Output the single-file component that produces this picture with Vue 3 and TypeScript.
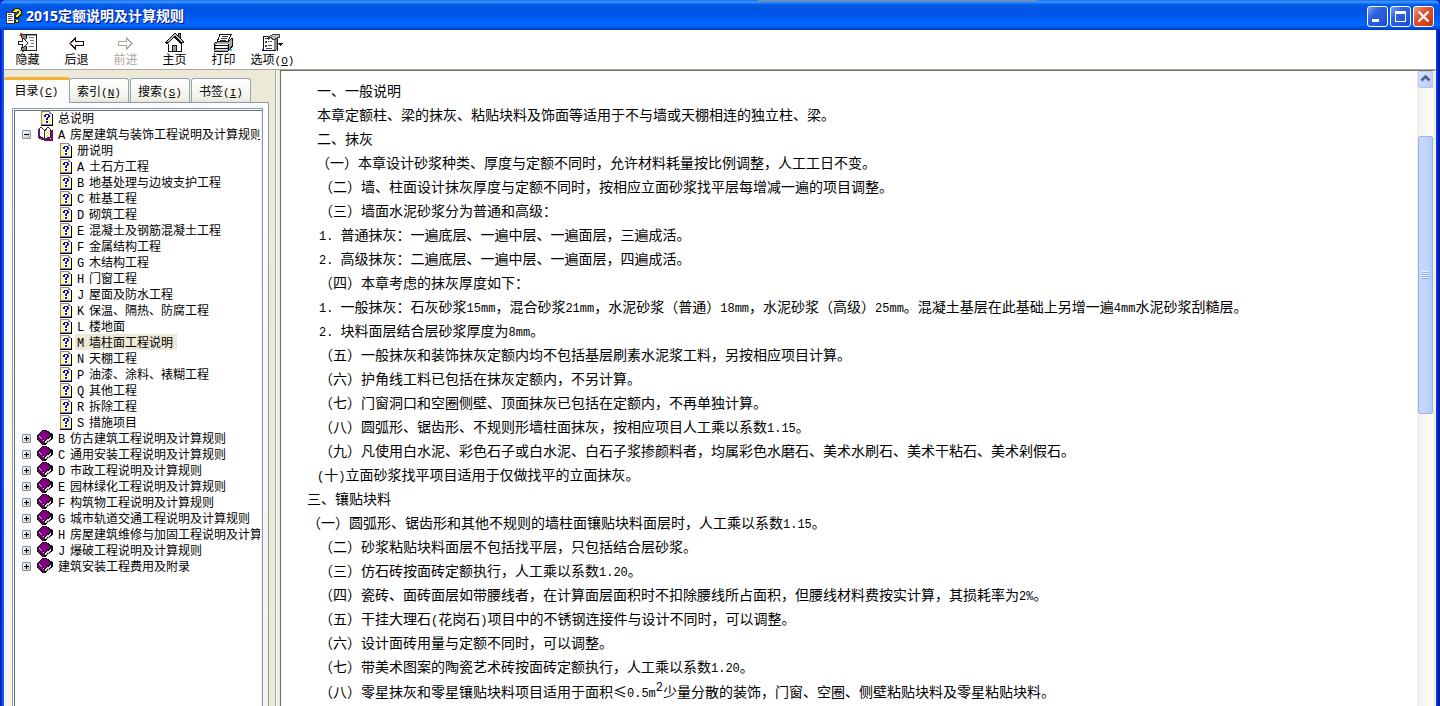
<script setup lang="ts">
import { ref } from 'vue'

interface Segment { text: string; latin: boolean }
interface Line { text: string; kind: 'flush' | 'lead' | 'item' | 'outer' | 'deep'; sup?: string; tail?: string }
interface Node { label: string; icon: 'page' | 'open' | 'book'; level: number; toggle?: '+' | '-' }

const split = (text: string): Segment[] =>
  text
    .split(/([\x20-\x7e]+)/)
    .filter(Boolean)
    .map((part) => ({ text: part, latin: /^[\x20-\x7e]/.test(part) }))

const title = '2015定额说明及计算规则'
const selected = ref('M 墙柱面工程说明')
const activeTab = ref('目录')

const tools = [
  { id: 'hide', label: '隐藏' },
  { id: 'back', label: '后退' },
  { id: 'forward', label: '前进' },
  { id: 'home', label: '主页' },
  { id: 'print', label: '打印' },
  { id: 'options', label: '选项', key: 'O' },
]

const tabs = [
  { label: '目录', key: 'C' },
  { label: '索引', key: 'N' },
  { label: '搜索', key: 'S' },
  { label: '书签', key: 'I' },
]

const chapters = [
  '册说明', 'A 土石方工程', 'B 地基处理与边坡支护工程', 'C 桩基工程', 'D 砌筑工程',
  'E 混凝土及钢筋混凝土工程', 'F 金属结构工程', 'G 木结构工程', 'H 门窗工程',
  'J 屋面及防水工程', 'K 保温、隔热、防腐工程', 'L 楼地面', 'M 墙柱面工程说明',
  'N 天棚工程', 'P 油漆、涂料、裱糊工程', 'Q 其他工程', 'R 拆除工程', 'S 措施项目',
]
const volumes = [
  'B 仿古建筑工程说明及计算规则', 'C 通用安装工程说明及计算规则', 'D 市政工程说明及计算规则',
  'E 园林绿化工程说明及计算规则', 'F 构筑物工程说明及计算规则', 'G 城市轨道交通工程说明及计算规则',
  'H 房屋建筑维修与加固工程说明及计算规则', 'J 爆破工程说明及计算规则', '建筑安装工程费用及附录',
]
const nodes: Node[] = [
  { label: '总说明', icon: 'page', level: 0 },
  { label: 'A 房屋建筑与装饰工程说明及计算规则', icon: 'open', level: 0, toggle: '-' },
  ...chapters.map((label): Node => ({ label, icon: 'page', level: 1 })),
  ...volumes.map((label): Node => ({ label, icon: 'book', level: 0, toggle: '+' })),
]

const lines: Line[] = [
  { kind: 'flush', text: '一、一般说明' },
  { kind: 'flush', text: '本章定额柱、梁的抹灰、粘贴块料及饰面等适用于不与墙或天棚相连的独立柱、梁。' },
  { kind: 'flush', text: '二、抹灰' },
  { kind: 'lead', text: '（一）本章设计砂浆种类、厚度与定额不同时，允许材料耗量按比例调整，人工工日不变。' },
  { kind: 'item', text: '（二）墙、柱面设计抹灰厚度与定额不同时，按相应立面砂浆找平层每增减一遍的项目调整。' },
  { kind: 'item', text: '（三）墙面水泥砂浆分为普通和高级：' },
  { kind: 'item', text: '1. 普通抹灰：一遍底层、一遍中层、一遍面层，三遍成活。' },
  { kind: 'item', text: '2. 高级抹灰：二遍底层、一遍中层、一遍面层，四遍成活。' },
  { kind: 'item', text: '（四）本章考虑的抹灰厚度如下：' },
  { kind: 'item', text: '1. 一般抹灰：石灰砂浆15mm，混合砂浆21mm，水泥砂浆（普通）18mm，水泥砂浆（高级）25mm。混凝土基层在此基础上另增一遍4mm水泥砂浆刮糙层。' },
  { kind: 'item', text: '2. 块料面层结合层砂浆厚度为8mm。' },
  { kind: 'item', text: '（五）一般抹灰和装饰抹灰定额内均不包括基层刷素水泥浆工料，另按相应项目计算。' },
  { kind: 'item', text: '（六）护角线工料已包括在抹灰定额内，不另计算。' },
  { kind: 'item', text: '（七）门窗洞口和空圈侧壁、顶面抹灰已包括在定额内，不再单独计算。' },
  { kind: 'item', text: '（八）圆弧形、锯齿形、不规则形墙柱面抹灰，按相应项目人工乘以系数1.15。' },
  { kind: 'item', text: '（九）凡使用白水泥、彩色石子或白水泥、白石子浆掺颜料者，均属彩色水磨石、美术水刷石、美术干粘石、美术剁假石。' },
  { kind: 'flush', text: '(十)立面砂浆找平项目适用于仅做找平的立面抹灰。' },
  { kind: 'outer', text: '三、镶贴块料' },
  { kind: 'outer', text: '（一）圆弧形、锯齿形和其他不规则的墙柱面镶贴块料面层时，人工乘以系数1.15。' },
  { kind: 'item', text: '（二）砂浆粘贴块料面层不包括找平层，只包括结合层砂浆。' },
  { kind: 'item', text: '（三）仿石砖按面砖定额执行，人工乘以系数1.20。' },
  { kind: 'item', text: '（四）瓷砖、面砖面层如带腰线者，在计算面层面积时不扣除腰线所占面积，但腰线材料费按实计算，其损耗率为2%。' },
  { kind: 'item', text: '（五）干挂大理石(花岗石)项目中的不锈钢连接件与设计不同时，可以调整。' },
  { kind: 'item', text: '（六）设计面砖用量与定额不同时，可以调整。' },
  { kind: 'item', text: '（七）带美术图案的陶瓷艺术砖按面砖定额执行，人工乘以系数1.20。' },
  { kind: 'item', text: '（八）零星抹灰和零星镶贴块料项目适用于面积≤0.5m', sup: '2', tail: '少量分散的装饰，门窗、空圈、侧壁粘贴块料及零星粘贴块料。' },
]
</script>

<template>
  <div class="window">
    <header class="titlebar">
      <span class="notch"></span>
      <svg class="app-icon" width="16" height="16" viewBox="0 0 16 16" shape-rendering="crispEdges">
        <path d="M0 4h8v11H0z" fill="#fff" stroke="#333" />
        <path d="M2 6h4v1H2zM2 8h5v1H2zM2 10h4v1H2zM2 12h5v1H2z" fill="#555" />
        <path d="M6 3V2h1V1h2V0h4v1h2v1h1v5h-1v1h-1v1h-1v2H9V7h1V6h1V5h1V3h-2v2H6zM9 12h4v3H9z" fill="#222" />
        <path d="M7 3h1V2h1V1h4v1h1v1h1v3h-1v1h-1v1h-1v1h-2V7h1V6h1V5h1V3h-2v1H7zM10 12h2v2h-2z" fill="#ffe818" />
      </svg>
      <h1>{{ title }}</h1>
      <button class="cap" aria-label="最小化">
        <svg width="21" height="21" viewBox="0 0 21 21"><path d="M5 13h7v3H5z" fill="#fff" /></svg>
      </button>
      <button class="cap" aria-label="最大化">
        <svg width="21" height="21" viewBox="0 0 21 21"><path d="M5 5h11v11H5zM6 8v7h9V8z" fill="#fff" fill-rule="evenodd" /></svg>
      </button>
      <button class="cap close" aria-label="关闭">
        <svg width="21" height="21" viewBox="0 0 21 21"><path d="M5.500 5.500l10 10M15.500 5.500l-10 10" stroke="#fff" stroke-width="2.200" /></svg>
      </button>
    </header>

    <div class="frame">
      <nav class="toolbar">
        <button v-for="tool in tools" :key="tool.id" class="tool" :disabled="tool.id === 'forward'">
          <svg v-if="tool.id === 'hide'" width="20" height="20" viewBox="0 0 20 20" shape-rendering="crispEdges">
            <path d="M2 1h17v1H2zM18 1h1v17h-1zM3 17h16v1H3zM3 2h1v3H3zM3 14h1v4H3zM8 2h1v4H8zM8 13h1v5H8z" fill="#222" />
            <path d="M4 2h4v15H4z" fill="#888" />
            <path d="M9 2h9v15H9z" fill="#fff" /><path d="M9 2h9v1H9z" fill="#999" />
            <path d="M11 4h5v1h-5zM12 7h4v1h-4zM13 10h3v1h-3zM11 13h5v1h-5z" fill="#777" />
            <path d="M0 8h4V5h2v1h1v1h1v1h1v1h1v2H9v1H8v1H7v1H6v1H4v-3H0z" fill="#222" />
            <path d="M1 9h4V6h1v1h1v1h1v1h1v2H8v1H7v1H6v1H5v-3H1z" fill="#fff" />
            <path d="M2 0h2v2H2zM4 18h2v1H4z" fill="#e02020" /><path d="M1 2h2v1H1zM2 17h2v1H2z" fill="#18b030" />
          </svg>
          <svg v-else-if="tool.id === 'back'" width="16" height="20" viewBox="0 0 16 20" shape-rendering="crispEdges">
            <path d="M0 10h1V9h1V8h1V7h1V6h1V5h1V4h1v4h8v5H7v4H6v-1H5v-1H4v-1H3v-1H2v-1H1v-1H0z" fill="#111" />
            <path d="M2 10h1V9h1V8h1V7h1v2h8v3H6v2H5v-1H4v-1H3v-1H2z" fill="#fff" />
            <path d="M0 10h2v1H0zM1 9h1v1H1z" fill="#d02020" /><path d="M1 11h1v1H1z" fill="#208030" />
          </svg>
          <svg v-else-if="tool.id === 'forward'" width="16" height="20" viewBox="0 0 16 20" shape-rendering="crispEdges">
            <path d="M15 10h-1V9h-1V8h-1V7h-1V6h-1V5H9V4H8v4H0v5h8v4h1v-1h1v-1h1v-1h1v-1h1v-1h1v-1h1z" fill="#aca899" />
            <path d="M13 10h-1V9h-1V8h-1V7H9v2H1v3h8v2h1v-1h1v-1h1v-1h1z" fill="#fff" />
          </svg>
          <svg v-else-if="tool.id === 'home'" width="20" height="20" viewBox="0 0 20 20" shape-rendering="crispEdges">
            <path d="M13 0h3v7h-3z" fill="#888" /><path d="M13 0h3v1h-3zM13 1h1v3h-1zM15 1h1v6h-1z" fill="#111" />
            <path d="M10 2l7 8v8H3v-8z" fill="#fff" />
            <path d="M3 11h1v8H3zM16 11h1v8h-1zM3 18h14v1H3z" fill="#111" />
            <path d="M9 0h2v1h1v1h1v1h1v1h1v1h1v1h1v1h1v1h1v2h-2v1h-2v-1h-1V9h-1V8h-1V7h-1V6h-1V5h-1V4H9v1H8v1H7v1H6v1H5v1H4v1H3v1H1v-1H0V9h1V8h1V7h1V6h1V5h1V4h1V3h1V2h1V1h1z" fill="#111" />
            <path d="M9 1h2v1h1v1h1v1h1v1h1v1h1v1h1v1h1v1h-2V8h-1V7h-1V6h-1V5h-1V4h-1V3H9v1H8v1H7v1H6v1H5v1H4v1H2V8h1V7h1V6h1V5h1V4h1V3h1V2h1z" fill="#bbb" />
            <path d="M7 12h5v6H7z" fill="#111" /><path d="M8 13h3v5H8z" fill="#999" />
          </svg>
          <svg v-else-if="tool.id === 'print'" width="22" height="20" viewBox="0 0 22 20" shape-rendering="crispEdges">
            <path d="M7 1.500h11L14.500 9H4z" fill="#fff" stroke="#111" />
            <path d="M9 3.500h6M8 5.500h6M7 7.500h6" stroke="#333" />
            <path d="M1.500 10.500L5 8.500h10l4-3v8l-4 4.500H1.500z" fill="#aaa" stroke="#111" />
            <path d="M3 11h12v1H3z" fill="#fff" /><path d="M2 12h13v1H2zM2 15h13v1H2z" fill="#111" />
            <path d="M3 13h11v2H3z" fill="#fff" /><path d="M3 16h11v1H3z" fill="#ddd" />
            <path d="M15 11h1v7h-1z" fill="#111" />
            <path d="M17 16h2v2h-2zM1 17h1v1H1z" fill="#18d8e8" />
          </svg>
          <svg v-else width="22" height="20" viewBox="0 0 22 20" shape-rendering="crispEdges">
            <path d="M1 3h13v15H1z" fill="#111" /><path d="M2 4h11v13H2z" fill="#fff" /><path d="M12 6h3v11h-3z" fill="#888" />
            <path d="M15 6h1v12h-1zM3 5h5v1H3z" fill="#222" />
            <path d="M3 8h2v2H3zM3 12h2v2H3zM6 8h1v1H6zM8 8h2v1H8zM6 12h4v1H6zM4 15h6v1H4z" fill="#444" />
            <path d="M6 3h2V2h2V1h8v4h-2v1h-2v1h-4V6H9V5H7v2H6z" fill="#444" />
            <path d="M8 3h2V2h7v2h-2v1h-2v1h-2V5h-1V4H8z" fill="#bbb" />
            <path d="M0 16h2v2H0z" fill="#1818d0" /><path d="M16 10h5v1h-5zM17 11h3v1h-3zM18 12h1v1h-1z" fill="#111" />
          </svg>
          <span>{{ tool.label }}<span v-if="tool.key" class="latin">(<u>{{ tool.key }}</u>)</span></span>
        </button>
      </nav>

      <div class="body">
        <aside class="side">
          <div class="tabs" role="tablist">
            <button
              v-for="tab in tabs" :key="tab.key" class="tab" role="tab"
              :class="{ active: tab.label === activeTab }" :aria-selected="tab.label === activeTab"
              @click="activeTab = tab.label"
            >{{ tab.label }}<span class="latin">(<u>{{ tab.key }}</u>)</span></button>
          </div>
          <div class="panel">
            <ul class="tree">
              <li v-for="node in nodes" :key="node.label" class="node" :class="{ child: node.level === 1 }">
                <button v-if="node.toggle" class="toggle" :aria-label="node.toggle === '+' ? '展开' : '折叠'">
                  <svg width="9" height="9" viewBox="0 0 9 9" shape-rendering="crispEdges">
                    <path d="M2 4h5v1H2z" fill="#000" /><path v-if="node.toggle === '+'" d="M4 2h1v5H4z" fill="#000" />
                  </svg>
                </button>
                <span v-else class="toggle-gap"></span>
                <svg class="glyph" width="16" height="16" viewBox="0 0 16 16" shape-rendering="crispEdges">
                  <g v-if="node.icon === 'page'">
                    <path d="M4 1h9v1h1v1h1v1h1v12H4z" fill="#000" />
                    <path d="M4 1h9v1h1v1h1v1h-3V2H5v12H4z" fill="#8a8a8a" />
                    <path d="M5 2h7v2h3v11H5z" fill="#fff" /><path d="M4 1h1v14H4zM5 14h10v1H5z" fill="#8a8a8a" />
                    <path d="M5 2h1v1H5zM7 2h1v1H7zM9 2h1v1H9zM6 3h1v1H6zM5 4h1v1H5zM13 4h1v1h-1zM6 5h1v1H6zM13 6h1v1h-1zM5 6h1v1H5zM6 7h1v1H6zM12 7h1v1h-1zM5 8h1v1H5zM7 8h1v1H7zM13 8h1v1h-1zM6 9h1v1H6zM12 9h1v1h-1zM5 10h1v1H5zM7 10h1v1H7zM11 10h1v1h-1zM13 10h1v1h-1zM6 11h1v1H6zM12 11h1v1h-1zM5 12h1v1H5zM7 12h1v1H7zM13 12h1v1h-1zM6 13h1v1H6zM12 13h1v1h-1z" fill="#ffee20" />
                    <path d="M8 4h4v1h1v2h-1v1h-1v2H9V8h1V7h1V5H9v2H7V5h1zM9 11h2v2H9z" fill="#0808e0" />
                  </g>
                  <g v-else-if="node.icon === 'open'">
                    <path d="M1 3h2v9h2v1h2v1h1v-1h6V4h2v11H7v-1H4v-1H2v-1H1z" fill="#800080" />
                    <path d="M2 2h1V1h2v1h1v1h1v1h1V3h1V2h1V1h2v1h1v1h1v9h-1v1H9v1H7v-1H5v-1H3v-1H2z" fill="#333" />
                    <path d="M3 2h2v1h1v1h1v8H6v-1H4v-1H3z" fill="#fff" />
                    <path d="M8 5h1V4h1V2h2v1h1v8h-3v1H8z" fill="#fff" />
                    <path d="M9 5h1v1H9zM11 4h1v1h-1zM10 6h1v1h-1zM12 5h1v1h-1zM9 7h1v1H9zM11 7h1v1h-1zM12 8h1v1h-1zM10 9h1v1h-1zM9 10h1v1H9zM11 10h1v1h-1z" fill="#f0d820" />
                  </g>
                  <g v-else>
                    <path d="M6 0h3l7 4v5l-8 6H6L0 10V5z" fill="#111" />
                    <path d="M6 1h3l5 4-6 5h-1L1 5z" fill="#800080" />
                    <path d="M1 6l6 5v3L1 9z" fill="#800080" />
                    <path d="M2 6h1v1H2zM3 7h1v1H3zM4 8h1v1H4zM6 10h1v1H6z" fill="#e8b0e8" />
                    <path d="M8 11l6-4v2l-6 4z" fill="#e8e8e8" /><path d="M9 12h2v-1h2v-1h1v1h-1v1h-2v1H9z" fill="#777" />
                  </g>
                </svg>
                <a href="#" class="label" :class="{ selected: node.label === selected }" @click.prevent="selected = node.label"><span
                  v-for="(seg, i) in split(node.label)" :key="i" :class="{ latin: seg.latin }"
                >{{ seg.text }}</span></a>
              </li>
            </ul>
          </div>
        </aside>
        <div class="splitter"></div>
        <main class="content">
          <article class="doc">
            <p v-for="line in lines" :key="line.text" :class="[line.kind, { raised: line.sup }]"><span
              v-for="(seg, i) in split(line.text)" :key="i" :class="{ latin: seg.latin }"
            >{{ seg.text }}</span><sup v-if="line.sup">{{ line.sup }}</sup>{{ line.tail }}</p>
          </article>
          <div class="scroll">
            <button class="arrow" aria-label="向上滚动">
              <svg width="15" height="15" viewBox="0 0 15 15"><path d="M3.500 9.500l4-4 4 4" fill="none" stroke="#4d6185" stroke-width="2.500" /></svg>
            </button>
            <div class="thumb"><i></i><i></i><i></i><i></i></div>
          </div>
        </main>
      </div>
    </div>
  </div>
</template>

<style>
body {
  margin: 0;
  overflow: hidden;
}
</style>

<style scoped>
.window {
  display: flex;
  flex-direction: column;
  height: 100vh;
  overflow: hidden;
  background: #0a24c8;
  color: #000;
  font: 12px/16px "Noto Sans CJK SC", sans-serif;
  text-spacing-trim: space-all;
  text-autospace: no-autospace;
}
button {
  margin: 0;
  padding: 0;
  border: 0;
  background: none;
  color: inherit;
  font: inherit;
}
.latin {
  font-family: "Liberation Mono", monospace;
  font-size: 11px;
  line-height: 0;
  white-space: pre;
}
.titlebar {
  position: relative;
  display: flex;
  align-items: center;
  flex: none;
  gap: 2px;
  height: 30px;
  padding: 2px 6px 0;
  box-sizing: border-box;
  border-radius: 6px 6px 0 0;
  background: linear-gradient(#0855dd 0, #3d95ff 1px, #2a86ff 3px, #0562e8 4px, #0054e3 8px, #0055e8 14px, #0066ff 24px, #0062fa 26px, #0044cc 29px, #0038b8 30px);
}
.notch {
  position: absolute;
  top: 0;
  left: 758px;
  width: 279px;
  height: 1px;
  background: #8c8c8c;
}
h1 {
  flex: 1;
  margin: 0 0 0 2px;
  color: #fff;
  font: bold 14px/20px "Open Sans", "Noto Sans CJK SC", sans-serif;
  text-shadow: 1px 1px #0a1883;
}
.cap {
  width: 21px;
  height: 21px;
  box-sizing: border-box;
  border: 1px solid #fff;
  border-radius: 3px;
  background: linear-gradient(135deg, #7aa2f5, #2f62e0 35%, #2558dc 70%, #1c4ac8);
}
.cap svg {
  display: block;
  margin: -1px;
}
.cap.close {
  background: linear-gradient(135deg, #f0a084, #e0502c 40%, #d84420 70%, #b83010);
}
.frame {
  display: flex;
  flex-direction: column;
  flex: 1;
  min-height: 0;
  border: solid #0a3be0;
  border-width: 0 4px;
  border-image: linear-gradient(90deg, #0019cf 0, #0019cf 1px, #0a48e4 2px, #166aee 4px, #166aee 50%, #0a48e4 calc(100% - 4px), #0020d0 calc(100% - 2px), #00138c 100%) 0 4;
  background: #ece9d8;
}
.toolbar {
  display: flex;
  flex: none;
  height: 39px;
  background: #fff;
  border-bottom: 1px solid #aca899;
}
.tool {
  display: flex;
  flex-direction: column;
  align-items: center;
  width: 49px;
  padding-top: 3px;
  white-space: nowrap;
}
.tool svg {
  flex: none;
}
.tool:first-child {
  width: 47px;
  margin-right: 1px;
}
.tool span {
  line-height: 12px;
}
.tool:disabled {
  color: #aca899;
}
.body {
  display: flex;
  flex: 1;
  min-height: 0;
}
.side {
  display: flex;
  flex-direction: column;
  flex: none;
  width: 265px;
  padding-top: 7px;
}
.tabs {
  display: flex;
  align-items: flex-end;
  flex: none;
  gap: 1px;
  height: 25px;
}
.tab {
  width: 60px;
  height: 24px;
  box-sizing: border-box;
  border: 1px solid #91a7b4;
  border-bottom: 0;
  border-radius: 3px 3px 0 0;
  background: linear-gradient(#fff, #f3f3ec 80%, #e6e5dc);
  white-space: nowrap;
}
.tab.active {
  position: relative;
  width: 66px;
  height: 26px;
  margin: 0 -2px -1px 0;
  padding-bottom: 4px;
  border-top: 3px solid #f8b030;
  border-left: 0;
  background: #fbfbfc;
}
.panel {
  display: flex;
  flex: 1;
  min-height: 0;
  padding: 5px 5px 0 8px;
  border: 1px solid #919b9c;
  border-width: 1px 1px 0 0;
  background: linear-gradient(#fcfcfe, #f4f3ee);
}
.tree {
  flex: 1;
  min-width: 0;
  margin: 0;
  padding: 0 2px 0 7px;
  overflow: hidden;
  border: 1px solid #7f9db9;
  border-bottom: 0;
  background: #fff;
  box-shadow: inset 1px 1px #fff, inset 2px 2px #716f64, inset -1px 0 #f1efe2;
  list-style: none;
}
.node {
  display: flex;
  align-items: center;
  height: 16px;
  padding-left: 2px;
  overflow: hidden;
  white-space: nowrap;
}
.node:first-child {
  margin-top: 1px;
}
.node.child {
  padding-left: 21px;
}
.toggle,
.toggle-gap {
  flex: none;
  width: 9px;
  height: 9px;
  margin-right: 6px;
}
.toggle {
  box-sizing: border-box;
  border: 1px solid #7898b5;
  border-radius: 1px;
  background: linear-gradient(135deg, #fff, #c6bdaf);
}
.toggle svg {
  display: block;
  margin: -1px;
}
.glyph {
  flex: none;
  margin-right: 3px;
}
.label {
  padding: 0 4px 0 2px;
  color: #000;
  text-decoration: none;
}
.label .latin {
  display: inline-block;
  width: 12px;
  font-size: 12px;
}
.label.selected {
  background: #ece9d8;
}
.splitter {
  flex: none;
  width: 11px;
  box-sizing: border-box;
  border-left: 6px solid #ece9d8;
  border-right: 3px solid #ece9d8;
  background: linear-gradient(90deg, #aca899 50%, #fff 50%);
  cursor: col-resize;
}
.content {
  display: flex;
  flex: 1;
  min-width: 0;
  border: 1px solid #716f64;
  border-width: 1px 3px 0 1px;
  border-right-color: #f1efe2;
  background: #fff;
}
.doc {
  flex: 1;
  min-width: 0;
  padding: 7px 0 0 26px;
  font-size: 14px;
  line-height: 24px;
  white-space: nowrap;
}
.doc p {
  margin: 0;
  padding-left: 10px;
}
.doc p.lead {
  padding-left: 9px;
}
.doc p.outer {
  padding-left: 0;
}
.doc p.item {
  padding-left: 12px;
}
.doc p.raised {
  line-height: 26px;
}
.doc .latin {
  font-size: 12px;
}
sup {
  font: 12px/0 "Liberation Mono", monospace;
}
.scroll {
  flex: none;
  width: 16px;
  box-sizing: border-box;
  border-left: 1px solid #eeede5;
  background: linear-gradient(90deg, #f3f1ec, #fefefb);
}
.arrow {
  display: block;
  width: 15px;
  height: 17px;
  border-radius: 2px;
  background: linear-gradient(135deg, #dce6ff, #b4c8f6);
  box-shadow: inset 0 0 0 1px #b8cbf6;
}
.thumb {
  display: flex;
  flex-direction: column;
  align-items: center;
  justify-content: center;
  gap: 1px;
  height: 278px;
  margin-top: 48px;
  box-sizing: border-box;
  border: 1px solid #98b4ea;
  border-radius: 2px;
  background: linear-gradient(90deg, #c9d7fc, #c2d3fd 60%, #b0cbf8);
}
.thumb i {
  width: 7px;
  height: 1px;
  background: #8cb0f8;
  box-shadow: 0 -1px #eef4fe;
}
</style>
